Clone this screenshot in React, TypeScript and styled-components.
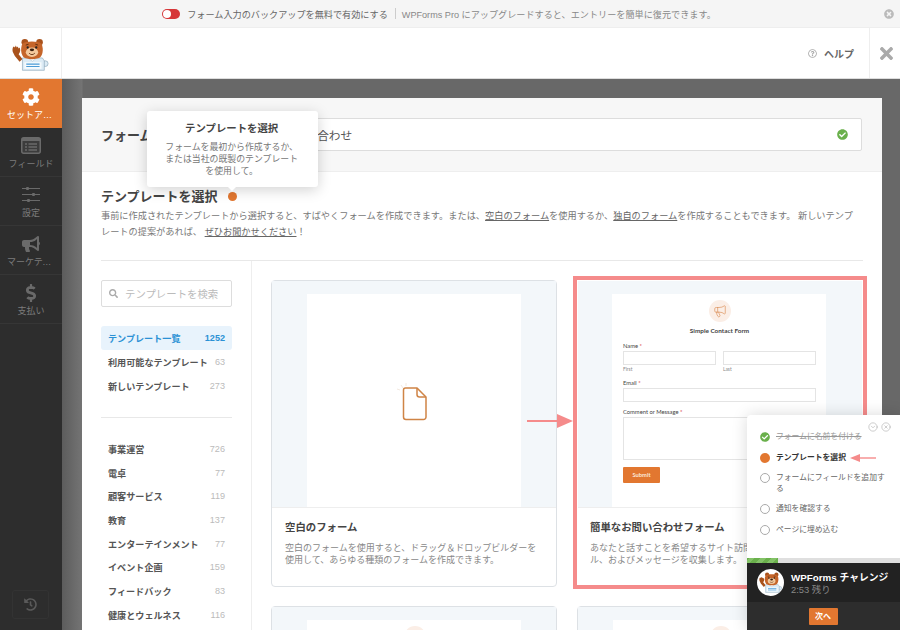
import styled, { createGlobalStyle } from 'styled-components';
import {
  FaBullhorn,
  FaCheckCircle,
  FaCog,
  FaDollarSign,
  FaHistory,
  FaRegQuestionCircle,
  FaSearch,
  FaTimes,
  FaTimesCircle,
} from 'react-icons/fa';
import { CircleChevronDown, CircleX, Megaphone } from 'lucide-react';

const ORANGE = '#e27730';
const PINK = '#f58b8b';

function FieldsIcon() {
  return (
    <svg width="20" height="17" viewBox="0 0 20 17">
      <rect x=".75" y=".75" width="18.5" height="15.5" rx="2" fill="#3c3c3c" stroke="#6a6a6a" strokeWidth="1.5" />
      <rect x="1" y="1" width="18" height="3" fill="#6a6a6a" />
      <path d="M4 7h2M4 10h2M4 13h2M7.5 7H16M7.5 10H16M7.5 13H16" stroke="#6a6a6a" strokeWidth="1.3" />
    </svg>
  );
}

function SlidersIcon() {
  return (
    <svg width="18" height="17" viewBox="0 0 18 17">
      <path d="M0 2.5h18M0 8.5h18M0 14.5h18" stroke="#6a6a6a" strokeWidth="1.1" />
      <rect x="4" y="1" width="3" height="3" rx="1" fill="#6a6a6a" />
      <rect x="10" y="7" width="3" height="3" rx="1" fill="#6a6a6a" />
      <rect x="5" y="13" width="3" height="3" rx="1" fill="#6a6a6a" />
    </svg>
  );
}

const NAV_ITEMS = [
  { label: 'セットアップ', icon: <FaCog />, active: true },
  { label: 'フィールド', icon: <FieldsIcon /> },
  { label: '設定', icon: <SlidersIcon /> },
  { label: 'マーケティング', icon: <FaBullhorn /> },
  { label: '支払い', icon: <FaDollarSign /> },
];

const MAIN_FILTERS = [
  { label: 'テンプレート一覧', count: 1252, active: true },
  { label: '利用可能なテンプレート', count: 63 },
  { label: '新しいテンプレート', count: 273 },
];

const CATEGORIES = [
  { label: '事業運営', count: 726 },
  { label: '電卓', count: 77 },
  { label: '顧客サービス', count: 119 },
  { label: '教育', count: 137 },
  { label: 'エンターテインメント', count: 77 },
  { label: 'イベント企画', count: 159 },
  { label: 'フィードバック', count: 83 },
  { label: '健康とウェルネス', count: 116 },
];

function Bear({ size }: { size: number }) {
  return (
    <svg width={size} height={size * 0.85} viewBox="0 0 40 34">
      {/* paw */}
      <path d="M1 15c-1-3 0-6 1-6l1 1 1-2 1 2 1-1 1 2 1-1c1 2 1 5-1 7l4 5-3 3-5-6z" fill="#a9521c" />
      <circle cx="35" cy="27" r="3" fill="#dcebf5" stroke="#7d9cb0" strokeWidth=".6" />
      {/* shirt */}
      <path d="M11 21h21l2 3v10H11z" fill="#dcebf5" stroke="#7d9cb0" strokeWidth=".6" />
      <rect x="13" y="25.5" width="18" height="7" fill="#f5fafd" />
      <path d="M15 27.5h14M15 30h14" stroke="#4a9bd6" strokeWidth="1.2" />
      <path d="M17 21l4.5 3.5 4.5-3.5" fill="#fff" stroke="#9fb8c8" strokeWidth=".5" />
      {/* ears and head */}
      <circle cx="13.5" cy="4.5" r="3.5" fill="#a9521c" />
      <circle cx="29" cy="4.5" r="3.5" fill="#a9521c" />
      <path d="M11 6c3-3 17-3 20 0 2 4 2 10-1 14-3 3-15 3-18 0-3-4-3-10-1-14z" fill="#c5652a" />
      <ellipse cx="21" cy="15" rx="6.5" ry="5" fill="#f4c99d" />
      <circle cx="16.5" cy="10" r="1.2" fill="#222" />
      <circle cx="25.5" cy="10" r="1.2" fill="#222" />
      <path d="M14.5 7.5l3-1M24.5 6.5l3 1" stroke="#5b2a0c" strokeWidth=".9" />
      <ellipse cx="21" cy="12.5" rx="2.3" ry="1.5" fill="#3a1d0b" />
      <path d="M18 16c2 2 4 2 6 0" stroke="#5b2a0c" strokeWidth=".9" fill="none" />
    </svg>
  );
}

function BlankFileIcon() {
  return (
    <svg width="34" height="40" viewBox="0 0 34 40" fill="none">
      <path d="M6 3l2 3M2 7l3 1M11 1v3" stroke="#f0e3d8" strokeWidth=".8" />
      <path
        d="M11 6h11l9 9v20a2.5 2.5 0 0 1-2.5 2.5h-17.5a2.5 2.5 0 0 1-2.5-2.5v-27a2 2 0 0 1 2-2z"
        stroke="#cf8446"
        strokeWidth="1.5"
      />
      <path d="M22 6v6.5a2.5 2.5 0 0 0 2.5 2.5h6.5" stroke="#cf8446" strokeWidth="1.5" />
    </svg>
  );
}

function ContactPreview() {
  return (
    <Sheet>
      <IconBadge>
        <Megaphone size={14} strokeWidth={1.1} />
      </IconBadge>
      <SheetTitle>Simple Contact Form</SheetTitle>
      <FieldLabel>
        Name <i>*</i>
      </FieldLabel>
      <NameRow>
        <div>
          <FieldBox />
          <FieldHint>First</FieldHint>
        </div>
        <div>
          <FieldBox />
          <FieldHint>Last</FieldHint>
        </div>
      </NameRow>
      <FieldLabel>
        Email <i>*</i>
      </FieldLabel>
      <FieldBox />
      <FieldLabel $gap>
        Comment or Message <i>*</i>
      </FieldLabel>
      <FieldBox $tall />
      <SubmitButton>Submit</SubmitButton>
    </Sheet>
  );
}

export default function App() {
  return (
    <Page>
      <GlobalStyle />
      <NoticeBar>
        <Toggle />
        <NoticeStrong>フォーム入力のバックアップを無料で有効にする</NoticeStrong>
        <NoticeDivider />
        <span>WPForms Pro にアップグレードすると、エントリーを簡単に復元できます。</span>
        <NoticeClose>
          <FaTimesCircle />
        </NoticeClose>
      </NoticeBar>

      <Header>
        <LogoCell>
          <Bear size={38} />
        </LogoCell>
        <HelpLink>
          <FaRegQuestionCircle />
          <span>ヘルプ</span>
        </HelpLink>
        <CloseCell>
          <FaTimes />
        </CloseCell>
      </Header>

      <Workspace>
        <Sidebar>
          {NAV_ITEMS.map((item) => (
            <NavItem key={item.label} $active={item.active}>
              <NavIcon>{item.icon}</NavIcon>
              <NavLabel>{item.label}</NavLabel>
            </NavItem>
          ))}
          <HistoryButton>
            <FaHistory />
          </HistoryButton>
        </Sidebar>

        <Main>
          <Panel>
            <NameSection>
              <NameLabel>フォーム名</NameLabel>
              <NameInput>
                <span>簡単なお問い合わせ</span>
                <FaCheckCircle />
              </NameInput>
            </NameSection>

            <Intro>
              <SectionTitle>
                テンプレートを選択
                <StepDot>
                  <Tooltip>
                    <TooltipTitle>テンプレートを選択</TooltipTitle>
                    フォームを最初から作成するか、
                    <br />
                    または当社の既製のテンプレート
                    <br />
                    を使用して。
                  </Tooltip>
                </StepDot>
              </SectionTitle>
              <Description>
                事前に作成されたテンプレートから選択すると、すばやくフォームを作成できます。または、<u>空白のフォーム</u>を使用するか、<u>独自のフォーム</u>を作成することもできます。 新しいテンプレートの提案があれば、 <u>ぜひお聞かせください</u>！
              </Description>
            </Intro>

            <Templates>
              <FilterColumn>
                <SearchBox>
                  <FaSearch />
                  <span>テンプレートを検索</span>
                </SearchBox>
                <FilterList>
                  {MAIN_FILTERS.map((f) => (
                    <FilterRow key={f.label} $active={f.active}>
                      <span>{f.label}</span>
                      <FilterCount $active={f.active}>{f.count}</FilterCount>
                    </FilterRow>
                  ))}
                </FilterList>
                <FilterList $divided>
                  {CATEGORIES.map((f) => (
                    <FilterRow key={f.label} $tight>
                      <span>{f.label}</span>
                      <FilterCount>{f.count}</FilterCount>
                    </FilterRow>
                  ))}
                </FilterList>
              </FilterColumn>

              <CardGrid>
                <Card>
                  <Preview>
                    <Sheet $centered>
                      <BlankFileIcon />
                    </Sheet>
                  </Preview>
                  <Caption>
                    <CaptionTitle>空白のフォーム</CaptionTitle>
                    <CaptionText>
                      空白のフォームを使用すると、ドラッグ＆ドロップビルダーを使用して、あらゆる種類のフォームを作成できます。
                    </CaptionText>
                  </Caption>
                </Card>

                <Card $selected>
                  <PointerArrow width="46" height="14" viewBox="0 0 46 14">
                    <path d="M0 7h32" stroke={PINK} strokeWidth="2" />
                    <path d="M30 0l16 7-16 7z" fill={PINK} />
                  </PointerArrow>
                  <Preview $selected>
                    <ContactPreview />
                  </Preview>
                  <Caption $selected>
                    <CaptionTitle>簡単なお問い合わせフォーム</CaptionTitle>
                    <CaptionText>
                      あなたと話すことを希望するサイト訪問者からの氏名、Eメール、およびメッセージを収集します。
                    </CaptionText>
                  </Caption>
                </Card>

                <Card>
                  <Preview>
                    <ContactPreview />
                  </Preview>
                </Card>
                <Card>
                  <Preview>
                    <ContactPreview />
                  </Preview>
                </Card>
              </CardGrid>
            </Templates>
          </Panel>
        </Main>
      </Workspace>

      <Checklist>
        <ChecklistTools>
          <CircleChevronDown size={10} strokeWidth={1.4} />
          <CircleX size={10} strokeWidth={1.4} />
        </ChecklistTools>
        <StepList>
          <StepRow $done>
            <FaCheckCircle />
            <s>フォームに名前を付ける</s>
          </StepRow>
          <StepRow $current>
            <CurrentMark />
            <b>テンプレートを選択</b>
            <StepArrow width="26" height="8" viewBox="0 0 26 8">
              <path d="M8 4h18" stroke={PINK} strokeWidth="1.4" />
              <path d="M0 4l10-4v8z" fill={PINK} />
            </StepArrow>
          </StepRow>
          <StepRow>
            <EmptyMark />
            <span>フォームにフィールドを追加する</span>
          </StepRow>
          <StepRow>
            <EmptyMark />
            <span>通知を確認する</span>
          </StepRow>
          <StepRow>
            <EmptyMark />
            <span>ページに埋め込む</span>
          </StepRow>
        </StepList>
        <Progress>
          <ProgressFill style={{ width: `${(2 / 5 - 0.2) * 100}%` }} />
        </Progress>
        <ChallengeInfo>
          <Avatar>
            <Bear size={24} />
          </Avatar>
          <div>
            <ChallengeTitle>WPForms チャレンジ</ChallengeTitle>
            <ChallengeTime>2:53 残り</ChallengeTime>
          </div>
        </ChallengeInfo>
        <ChallengeFooter>
          <NextButton>次へ</NextButton>
        </ChallengeFooter>
      </Checklist>
    </Page>
  );
}

const GlobalStyle = createGlobalStyle`
  html, body {
    margin: 0;
    height: 100%;
    overflow: hidden;
  }
  body {
    font-family: "Liberation Sans", "Noto Sans CJK JP", sans-serif;
    color: #444;
  }
  #root {
    height: 100%;
  }
`;

const Page = styled.div`
  position: relative;
  display: flex;
  flex-direction: column;
  height: 100%;
  overflow: hidden;
`;

const NoticeBar = styled.div`
  position: relative;
  display: flex;
  align-items: center;
  justify-content: center;
  flex: 0 0 28px;
  box-sizing: border-box;
  padding-right: 22px;
  background: #f5f5f5;
  border-bottom: 1px solid #eee;
  font-size: 9.15px;
  color: #888;
`;

const Toggle = styled.span`
  position: relative;
  width: 18px;
  height: 10px;
  margin-right: 7px;
  border-radius: 5px;
  background: #d63638;

  &::after {
    content: '';
    position: absolute;
    left: 1px;
    top: 1px;
    width: 8px;
    height: 8px;
    border-radius: 50%;
    background: #fff;
  }
`;

const NoticeStrong = styled.span`
  color: #666;
`;

const NoticeDivider = styled.span`
  width: 1px;
  height: 11px;
  margin: 0 6px 0 7px;
  background: #ccc;
`;

const NoticeClose = styled.span`
  position: absolute;
  right: 6px;
  top: 9px;
  font-size: 10px;
  line-height: 10px;
  color: #bbb;
`;

const Header = styled.header`
  display: flex;
  align-items: stretch;
  flex: 0 0 51px;
  box-sizing: border-box;
  background: #fff;
  border-bottom: 1px solid #ddd;
`;

const LogoCell = styled.div`
  display: flex;
  align-items: center;
  justify-content: center;
  width: 62px;
  box-sizing: border-box;
  padding-top: 3px;
  border-right: 1px solid #eee;
`;

const HelpLink = styled.div`
  display: flex;
  align-items: center;
  gap: 7px;
  margin-left: auto;
  padding-right: 15px;
  font-size: 10px;
  font-weight: 700;
  color: #666;

  svg {
    font-size: 9px;
    color: #aaa;
  }
`;

const CloseCell = styled.div`
  display: flex;
  align-items: center;
  justify-content: flex-end;
  width: 31px;
  box-sizing: border-box;
  padding-right: 4px;
  border-left: 1px solid #eee;
  font-size: 19px;
  color: #aaa;
`;

const Workspace = styled.div`
  display: flex;
  flex: 1;
  min-height: 0;
`;

const Sidebar = styled.nav`
  position: relative;
  flex: 0 0 62px;
  background: #2d2d2d;
`;

const NavItem = styled.div<{ $active?: boolean }>`
  display: flex;
  flex-direction: column;
  align-items: center;
  height: 49px;
  box-sizing: border-box;
  padding-top: 8px;
  border-bottom: 1px solid ${(p) => (p.$active ? ORANGE : '#363636')};
  background: ${(p) => (p.$active ? ORANGE : 'transparent')};
  color: ${(p) => (p.$active ? '#fff' : '#7c7c7c')};

  svg {
    color: ${(p) => (p.$active ? '#fff' : '#6a6a6a')};
  }
`;

const NavIcon = styled.span`
  display: flex;
  align-items: center;
  justify-content: center;
  height: 19px;
  font-size: 18px;
`;

const NavLabel = styled.span`
  width: 48px;
  margin-top: 2px;
  overflow: hidden;
  font-size: 9px;
  line-height: 14px;
  text-align: center;
  text-overflow: ellipsis;
  white-space: nowrap;
`;

const HistoryButton = styled.div`
  position: absolute;
  left: 12px;
  bottom: 11px;
  display: flex;
  align-items: center;
  justify-content: center;
  width: 37px;
  height: 29px;
  border: 1px solid #333;
  border-radius: 3px;
  box-sizing: border-box;
  font-size: 13px;
  color: #5a5a5a;
`;

const Main = styled.main`
  flex: 1;
  min-width: 0;
  padding: 19px 18px 0 20px;
  background: linear-gradient(to right, #5c5c5c 0, #747474 20px, #686868 21px);
`;

const Panel = styled.div`
  height: 100%;
  background: #fff;
`;

const NameSection = styled.section`
  display: flex;
  align-items: center;
  height: 74px;
  box-sizing: border-box;
  padding: 0 20px 0 19px;
  background: #f7f7f7;
  border-bottom: 1px solid #eee;
`;

const NameLabel = styled.div`
  flex: 0 0 133px;
  font-size: 13px;
  font-weight: 700;
  color: #444;
`;

const NameInput = styled.div`
  display: flex;
  align-items: center;
  justify-content: space-between;
  flex: 1;
  height: 33px;
  box-sizing: border-box;
  padding: 0 13px 0 12px;
  background: #fff;
  border: 1px solid #ddd;
  border-radius: 2px;
  font-size: 11.7px;
  color: #555;

  svg {
    font-size: 11px;
    color: #6ab04c;
  }
`;

const Intro = styled.section`
  padding: 14px 20px 0 19px;
`;

const SectionTitle = styled.h2`
  display: flex;
  align-items: center;
  margin: 0;
  font-size: 13px;
  line-height: 22px;
  font-weight: 700;
  color: #444;
`;

const StepDot = styled.span`
  position: relative;
  top: -1px;
  width: 9px;
  height: 9px;
  margin-left: 10px;
  border-radius: 50%;
  background: ${ORANGE};
`;

const Tooltip = styled.div`
  position: absolute;
  left: 50%;
  bottom: calc(100% + 5px);
  width: 171px;
  height: 76px;
  box-sizing: border-box;
  padding: 11px 2px 0 0;
  margin-left: -85px;
  background: #fff;
  border-radius: 3px;
  box-shadow: 0 3px 14px rgba(0, 0, 0, 0.18);
  font-size: 8.9px;
  font-weight: 400;
  line-height: 12px;
  text-align: center;
  color: #777;

  &::after {
    content: '';
    position: absolute;
    left: 81px;
    bottom: -4px;
    border-left: 4px solid transparent;
    border-right: 4px solid transparent;
    border-top: 4px solid #fff;
  }
`;

const TooltipTitle = styled.div`
  margin-bottom: 5px;
  font-size: 10.4px;
  line-height: 14px;
  font-weight: 700;
  color: #444;
`;

const Description = styled.p`
  margin: 0;
  font-size: 9.2px;
  line-height: 16px;
  color: #777;

  u {
    color: #666;
  }
`;

const Templates = styled.div`
  display: flex;
  margin: 20px 19px 0 19px;
  border-top: 1px solid #e8e8e8;
`;

const FilterColumn = styled.aside`
  flex: 0 0 151px;
  box-sizing: border-box;
  padding: 19px 19px 0 0;
  border-right: 1px solid #eee;
`;

const SearchBox = styled.div`
  display: flex;
  align-items: center;
  gap: 7px;
  height: 27px;
  box-sizing: border-box;
  padding-left: 7px;
  border: 1px solid #ddd;
  border-radius: 2px;
  font-size: 10.4px;
  color: #bbb;

  svg {
    font-size: 9px;
    color: #aaa;
  }
`;

const FilterList = styled.div<{ $divided?: boolean }>`
  margin-top: 19px;
  padding-top: ${(p) => (p.$divided ? '19px' : '0')};
  border-top: ${(p) => (p.$divided ? '1px solid #e8e8e8' : '0')};
`;

const FilterRow = styled.div<{ $active?: boolean; $tight?: boolean }>`
  display: flex;
  align-items: center;
  justify-content: space-between;
  height: ${(p) => (p.$tight ? '23.7px' : '24px')};
  padding: 0 7px;
  border-radius: 3px;
  background: ${(p) => (p.$active ? '#e8f3fc' : 'transparent')};
  font-size: 9.1px;
  font-weight: 700;
  color: ${(p) => (p.$active ? '#2b91d5' : '#555')};
  white-space: nowrap;
`;

const FilterCount = styled.span<{ $active?: boolean }>`
  color: ${(p) => (p.$active ? '#2b91d5' : '#bbb')};
  font-weight: ${(p) => (p.$active ? 700 : 400)};
`;

const CardGrid = styled.div`
  display: grid;
  grid-template-columns: 286px 286px;
  align-content: start;
  align-items: start;
  gap: 19px 20px;
  padding: 19px 0 0 19px;
`;

const Card = styled.article<{ $selected?: boolean }>`
  position: relative;
  height: ${(p) => (p.$selected ? '305px' : '307px')};
  box-sizing: border-box;
  border: 1px solid ${(p) => (p.$selected ? 'transparent' : '#dde1e5')};
  border-radius: ${(p) => (p.$selected ? '0' : '4px')};
  outline: ${(p) => (p.$selected ? `4px solid ${PINK}` : 'none')};
  background: #fff;
`;

const PointerArrow = styled.svg`
  position: absolute;
  left: -51px;
  top: 133px;
`;

const Preview = styled.div<{ $selected?: boolean }>`
  display: flex;
  justify-content: center;
  height: 227px;
  box-sizing: border-box;
  padding: 13px ${(p) => (p.$selected ? '2px' : '0')} 0 0;
  background: #f3f7fa;
  border-bottom: 1px solid #eee;
`;

const Sheet = styled.div<{ $centered?: boolean }>`
  display: flex;
  flex-direction: column;
  align-items: ${(p) => (p.$centered ? 'center' : 'stretch')};
  justify-content: ${(p) => (p.$centered ? 'center' : 'flex-start')};
  width: 214px;
  box-sizing: border-box;
  padding: ${(p) => (p.$centered ? '3px 4px 0 0' : '6px 10px 0 11px')};
  background: #fff;
  font-family: Lato, "Liberation Sans", sans-serif;
`;

const IconBadge = styled.div`
  display: flex;
  align-items: center;
  justify-content: center;
  align-self: center;
  width: 22px;
  height: 22px;
  border-radius: 50%;
  background: #fbeee6;
  color: #d98a50;
`;

const SheetTitle = styled.div`
  margin-top: 2px;
  margin-bottom: 4px;
  font-size: 6.4px;
  line-height: 14px;
  font-weight: 700;
  text-align: center;
  color: #444;
`;

const FieldLabel = styled.div<{ $gap?: boolean }>`
  margin-top: ${(p) => (p.$gap ? '6.5px' : '0')};
  margin-bottom: 1px;
  font-size: 5.8px;
  line-height: 8px;
  color: #444;

  i {
    font-style: normal;
    color: #d63638;
  }
`;

const NameRow = styled.div`
  display: grid;
  grid-template-columns: 93px 93px;
  gap: 7px;
  margin-bottom: 6.5px;
`;

const FieldBox = styled.div<{ $tall?: boolean }>`
  height: ${(p) => (p.$tall ? '43px' : '13.5px')};
  box-sizing: border-box;
  border: 1px solid #e4e4e4;
`;

const FieldHint = styled.div`
  font-size: 4.8px;
  line-height: 8px;
  color: #888;
`;

const SubmitButton = styled.div`
  width: 37px;
  height: 16px;
  margin-top: 7px;
  border-radius: 1px;
  background: ${ORANGE};
  color: #fbe6d6;
  font-size: 5.8px;
  font-weight: 700;
  line-height: 16px;
  text-align: center;
`;

const Caption = styled.div<{ $selected?: boolean }>`
  padding: 13px 17px 0 ${(p) => (p.$selected ? '12px' : '13px')};
`;

const CaptionTitle = styled.h3`
  margin: 0;
  font-size: 10.4px;
  line-height: 14px;
  font-weight: 700;
  color: #444;
`;

const CaptionText = styled.p`
  margin: 7px 0 0;
  font-size: 9px;
  line-height: 12px;
  color: #888;
`;

const Checklist = styled.aside`
  position: absolute;
  right: 0;
  bottom: 0;
  display: flex;
  flex-direction: column;
  width: 153px;
  height: 215px;
  background: #fff;
  border-radius: 4px 0 0 0;
  box-shadow: 0 0 16px rgba(0, 0, 0, 0.15);
`;

const ChecklistTools = styled.div`
  position: absolute;
  top: 7px;
  right: 9px;
  display: flex;
  gap: 3px;
  color: #aaa;
`;

const StepList = styled.ul`
  flex: 1;
  margin: 0;
  padding: 17px 11px 0 13px;
  list-style: none;
`;

const StepRow = styled.li<{ $done?: boolean; $current?: boolean }>`
  position: relative;
  display: flex;
  align-items: flex-start;
  gap: 6px;
  margin-bottom: 10px;
  font-size: 7.8px;
  line-height: 10.5px;
  color: ${(p) => (p.$done ? '#999' : p.$current ? '#333' : '#666')};

  > svg:first-child {
    flex: none;
    width: 10px;
    height: 10px;
    color: #6ab04c;
  }
`;

const CurrentMark = styled.span`
  flex: none;
  width: 10px;
  height: 10px;
  border-radius: 50%;
  background: ${ORANGE};
`;

const EmptyMark = styled.span`
  flex: none;
  width: 10px;
  height: 10px;
  box-sizing: border-box;
  border: 1px solid #aaa;
  border-radius: 50%;
`;

const StepArrow = styled.svg`
  position: absolute;
  left: 90px;
  top: 1px;
`;

const Progress = styled.div`
  flex: 0 0 5px;
  background: #dfdfdf;
`;

const ProgressFill = styled.div`
  height: 100%;
  background: repeating-linear-gradient(-45deg, #6ab04c 0 4px, #83c267 4px 8px);
`;

const ChallengeInfo = styled.div`
  display: flex;
  align-items: center;
  gap: 7px;
  flex: 0 0 39px;
  padding-left: 10px;
  background: #222;
`;

const Avatar = styled.div`
  display: flex;
  align-items: center;
  justify-content: center;
  width: 27px;
  height: 27px;
  overflow: hidden;
  border-radius: 50%;
  background: #fff;
`;

const ChallengeTitle = styled.div`
  font-size: 9.8px;
  line-height: 13px;
  font-weight: 700;
  color: #fff;
  white-space: nowrap;
`;

const ChallengeTime = styled.div`
  font-size: 9.4px;
  line-height: 11px;
  color: #888;
`;

const ChallengeFooter = styled.div`
  display: flex;
  align-items: center;
  justify-content: center;
  flex: 0 0 28px;
  padding-right: 1px;
  background: #2d2d2d;
`;

const NextButton = styled.div`
  width: 29px;
  height: 17px;
  border-radius: 1px;
  background: ${ORANGE};
  color: #fff;
  font-size: 8px;
  font-weight: 700;
  line-height: 17px;
  text-align: center;
`;
